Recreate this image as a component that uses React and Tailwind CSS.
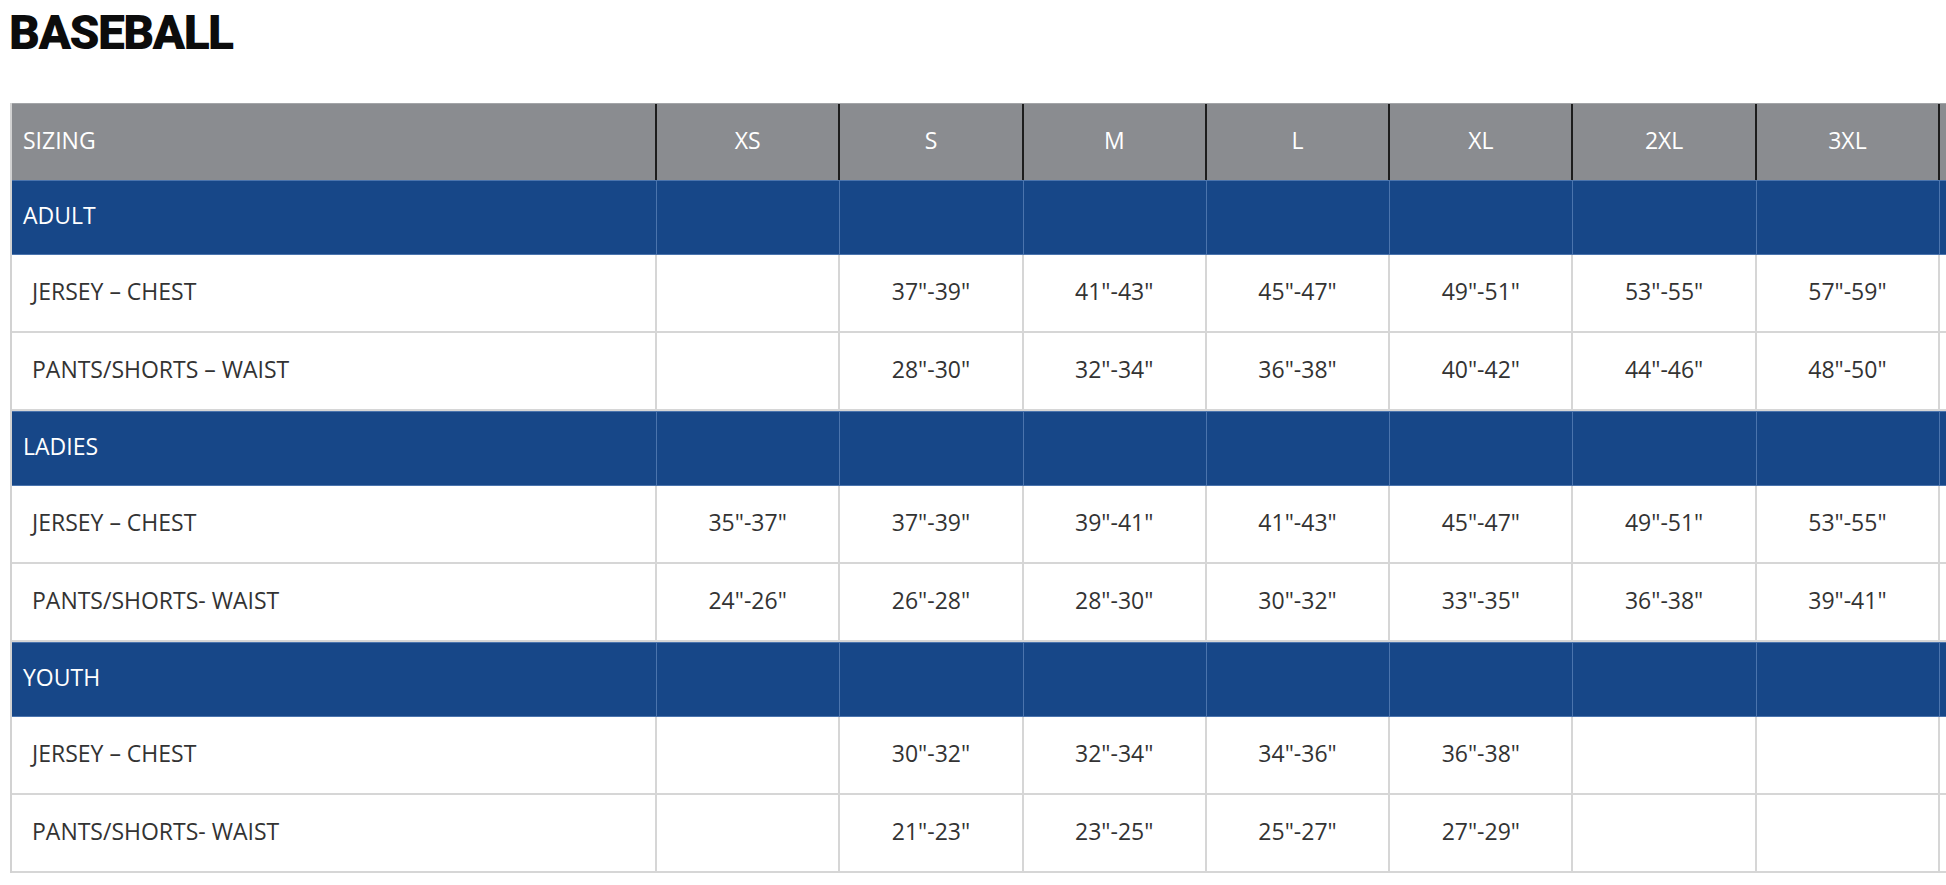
import React from "react";

const SIZES = ["XS", "S", "M", "L", "XL", "2XL", "3XL", ""];

const GROUPS = [
	{
		name: "ADULT",
		rows: [
			{ label: "JERSEY – CHEST", values: ["", '37"-39"', '41"-43"', '45"-47"', '49"-51"', '53"-55"', '57"-59"', ""] },
			{ label: "PANTS/SHORTS – WAIST", values: ["", '28"-30"', '32"-34"', '36"-38"', '40"-42"', '44"-46"', '48"-50"', ""] },
		],
	},
	{
		name: "LADIES",
		rows: [
			{ label: "JERSEY – CHEST", values: ['35"-37"', '37"-39"', '39"-41"', '41"-43"', '45"-47"', '49"-51"', '53"-55"', ""] },
			{ label: "PANTS/SHORTS- WAIST", values: ['24"-26"', '26"-28"', '28"-30"', '30"-32"', '33"-35"', '36"-38"', '39"-41"', ""] },
		],
	},
	{
		name: "YOUTH",
		rows: [
			{ label: "JERSEY – CHEST", values: ["", '30"-32"', '32"-34"', '34"-36"', '36"-38"', "", "", ""] },
			{ label: "PANTS/SHORTS- WAIST", values: ["", '21"-23"', '23"-25"', '25"-27"', '27"-29"', "", "", ""] },
		],
	},
];

const ROW = "grid grid-cols-[645px_repeat(8,183.3px)]";

const HeaderRow = () => (
	<div className={`${ROW} h-[77px] bg-[#8a8c90] text-white border-t border-[#a3a5a8]`}>
		<div className="flex items-center pl-[11px] pb-1 border-r-2 border-[#1d1d1d]">SIZING</div>
		{SIZES.map((size, i) => (
			<div key={i} className="flex items-center justify-center pb-1 border-r-2 border-[#1d1d1d]">{size}</div>
		))}
	</div>
);

const GroupRow = ({ name }) => (
	<div className={`${ROW} h-[75px] bg-[#174788] text-white border-y border-[#4b74ad]`}>
		<div className="flex items-center pl-[11px] pb-1 border-r border-[#4b74ad]">{name}</div>
		{SIZES.map((size, i) => (
			<div key={i} className="border-r border-[#4b74ad]" />
		))}
	</div>
);

const DataRow = ({ label, values }) => (
	<div className={`${ROW} h-[78px] bg-white text-[#333333]`}>
		<div className="flex items-center pl-[20px] pb-1 border-r-2 border-b-2 border-[#d6d6d6]">{label}</div>
		{values.map((v, i) => (
			<div key={i} className="flex items-center justify-center pb-1 border-r-2 border-b-2 border-[#d6d6d6]">{v}</div>
		))}
	</div>
);

export default function App() {
	return (
		<div className="w-[1946px] h-[885px] overflow-hidden bg-white">
			<h1 className="ml-[9px] pt-[9px] text-[48px] leading-[48px] font-black tracking-[-1.6px] text-[#0c0c0c] font-['Roboto',sans-serif]">
				BASEBALL
			</h1>
			<div className="mt-[46px] ml-[10px] w-max border-l-2 border-[#d2d2d2] text-[23px] font-['Open_Sans',sans-serif]">
				<HeaderRow />
				{GROUPS.map(group => (
					<React.Fragment key={group.name}>
						<GroupRow name={group.name} />
						{group.rows.map(row => (
							<DataRow key={row.label} label={row.label} values={row.values} />
						))}
					</React.Fragment>
				))}
			</div>
		</div>
	);
}
